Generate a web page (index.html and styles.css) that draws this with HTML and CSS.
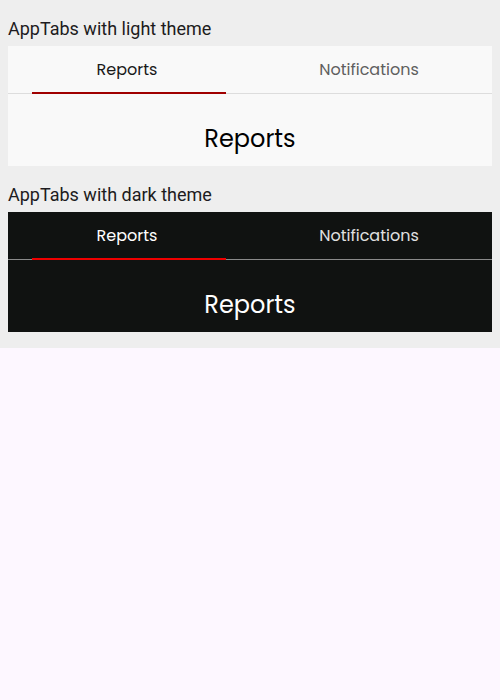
FILE: index.html
```html
<!DOCTYPE html>
<html>
<head>
<meta charset="utf-8">
<link rel="stylesheet" href="styles.css">
</head>
<body>
<div class="demo">
  <section class="example">
    <h2 class="title">AppTabs with light theme</h2>
    <div class="tabs light">
      <div class="tabbar">
        <div class="tab active">Reports</div>
        <div class="tab">Notifications</div>
      </div>
      <div class="panel">Reports</div>
    </div>
  </section>
  <section class="example">
    <h2 class="title">AppTabs with dark theme</h2>
    <div class="tabs dark">
      <div class="tabbar">
        <div class="tab active">Reports</div>
        <div class="tab">Notifications</div>
      </div>
      <div class="panel">Reports</div>
    </div>
  </section>
</div>
</body>
</html>
```
FILE: styles.css
```css
html, body {
  margin: 0;
  padding: 0;
  background: #fdf7ff;
}
.demo {
  background: #eeeeee;
  padding: 0 8px 16px;
}
.title {
  margin: 0;
  padding: 17px 0 5px;
  font-family: Roboto, "Liberation Sans", sans-serif;
  font-weight: 400;
  font-size: 18px;
  line-height: 24px;
  color: #1d1b20;
}
.tabs {
  display: flex;
  flex-direction: column;
}
.tabbar {
  display: flex;
  height: 48px;
  box-sizing: border-box;
  border-bottom: 1px solid #dddddd;
}
.tab {
  flex: 1;
  position: relative;
  display: flex;
  align-items: center;
  justify-content: center;
  font-family: "Poppins", "Open Sans", sans-serif;
  font-size: 16px;
  padding: 0 4px 1px 0;
}
.tab.active::after {
  content: "";
  position: absolute;
  left: 24px;
  right: 24px;
  bottom: -1px;
  height: 2px;
}
.panel {
  height: 72px;
  display: flex;
  align-items: center;
  justify-content: center;
  font-family: "Poppins", "Open Sans", sans-serif;
  font-size: 24px;
  padding-top: 17px;
  box-sizing: border-box;
}
.light {
  background: #f9f9f9;
}
.light .tab {
  color: #5f5f5f;
}
.light .tab.active {
  color: #1a1a1a;
}
.light .tab.active::after {
  background: #a00000;
}
.light .panel {
  color: #000000;
}
.dark {
  background: #101211;
}
.dark .tabbar {
  border-bottom-color: #8a8a8a;
}
.dark .tab {
  color: #e0e0e0;
}
.dark .tab.active {
  color: #ffffff;
}
.dark .tab.active::after {
  background: #ee0000;
}
.dark .panel {
  color: #ffffff;
}
```
